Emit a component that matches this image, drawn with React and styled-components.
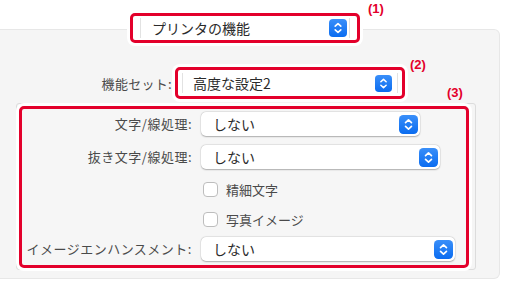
import React from "react";
import styled, { createGlobalStyle } from "styled-components";

const GlobalStyle = createGlobalStyle`
  body {
    margin: 0;
    background: #ffffff;
    font-family: "Noto Sans CJK JP", "Noto Sans", sans-serif;
  }
`;

const Page = styled.div`
  position: relative;
  width: 526px;
  height: 283px;
  padding-top: 13px;
  box-sizing: border-box;
  overflow: hidden;
`;

const Note = styled.span`
  position: absolute;
  left: ${(props) => props.$x}px;
  top: ${(props) => props.$y}px;
  font-family: "Liberation Sans", Arial, sans-serif;
  font-weight: 700;
  font-size: 13px;
  line-height: 14px;
  color: #e3002b;
`;

const Highlight = styled.div`
  position: relative;
  z-index: 1;
  box-sizing: border-box;
  width: ${(props) => props.$w}px;
  height: ${(props) => (props.$h ? `${props.$h}px` : "auto")};
  border: 3px solid #e3002b;
  border-radius: 5px;
  box-shadow: 0 0 0 3px #ffffff;
  background: ${(props) => props.$bg || "#ffffff"};
`;

const TabRow = styled.div`
  position: relative;
  z-index: 1;
  margin-left: 130px;
`;

const Panel = styled.div`
  margin-top: -14px;
  width: 500px;
  height: 250px;
  box-sizing: border-box;
  padding: 38px 0 0 16px;
  background: #f5f5f5;
  border: 1px solid #e7e7e7;
  border-left: none;
  border-radius: 0 6px 6px 0;
`;

const SetRow = styled.div`
  display: flex;
  align-items: center;
  margin-left: -16px;
  margin-top: -1px;
`;

const SetLabel = styled.span`
  width: 172px;
  text-align: right;
  font-size: 13px;
  letter-spacing: 0.3px;
  color: #4a4a4a;
  margin-right: 3px;
`;

const FlatPopup = styled.div`
  display: flex;
  align-items: center;
  height: 100%;
  padding: 0 ${(props) => props.$inset}px;
`;

const FlatField = styled.div`
  flex: 1;
  display: flex;
  align-items: center;
  height: 20px;
  border-left: 1px solid #e2e2e2;
  border-right: 1px solid #e2e2e2;
  padding: 0 ${(props) => props.$right}px 0 ${(props) => props.$left}px;
  font-size: 14px;
  color: #2a2a2a;
`;

const Value = styled.span`
  flex: 1;
`;

const GroupBox = styled.div`
  margin-top: 4px;
  width: 460px;
  height: 167px;
  box-sizing: border-box;
  border: 1px solid #dcdcdc;
  border-radius: 3px;
  padding: 2px 0 0 2px;
`;

const Rows = styled.div`
  display: grid;
  grid-template-columns: 170px 1fr;
  column-gap: 9px;
  align-items: center;
  padding: 3px 0 4px;
`;

const Label = styled.span`
  text-align: right;
  font-size: 13px;
  letter-spacing: 0.5px;
  color: #4a4a4a;
  margin-top: ${(props) => props.$top || 0}px;
  line-height: 24px;
`;

const Popup = styled.div`
  display: flex;
  align-items: center;
  box-sizing: border-box;
  width: ${(props) => props.$w}px;
  height: 24px;
  margin-top: ${(props) => props.$top || 0}px;
  padding: 0 2px 0 12px;
  background: #ffffff;
  border-radius: 5px;
  box-shadow: 0 0.5px 1.5px rgba(0, 0, 0, 0.28), 0 0 0 0.5px rgba(0, 0, 0, 0.06);
  font-size: 14px;
  color: #2a2a2a;
`;

const CheckRow = styled.label`
  grid-column: 2;
  display: flex;
  align-items: center;
  gap: 8px;
  height: 24px;
  margin-top: ${(props) => props.$top || 0}px;
  padding-left: 2px;
  font-size: 13px;
  color: #4a4a4a;
`;

const Box = styled.span`
  width: 15px;
  height: 15px;
  box-sizing: border-box;
  border: 1px solid #bdbdbd;
  border-radius: 4px;
  background: #ffffff;
`;

const Stepper = ({ size = 18 }) => (
  <svg width={size} height={size} viewBox="0 0 18 18">
    <defs>
      <linearGradient id="stepperBlue" x1="0" y1="0" x2="0" y2="1">
        <stop offset="0" stopColor="#3a8ff9" />
        <stop offset="1" stopColor="#0a6cf0" />
      </linearGradient>
    </defs>
    <rect x="0" y="0" width="18" height="18" rx="4" fill="url(#stepperBlue)" />
    <path
      d="M6.2 7.2 L9 4.6 L11.8 7.2 M6.2 10.8 L9 13.4 L11.8 10.8"
      fill="none"
      stroke="#ffffff"
      strokeWidth="1.6"
      strokeLinecap="round"
      strokeLinejoin="round"
    />
  </svg>
);

const App = () => {
  return (
    <Page>
      <GlobalStyle />
      <Note $x={368} $y={2}>(1)</Note>
      <Note $x={410} $y={58}>(2)</Note>
      <Note $x={447} $y={86}>(3)</Note>

      <TabRow>
        <Highlight $w={230} $h={30}>
          <FlatPopup $inset={7}>
            <FlatField $left={11} $right={2}>
              <Value>プリンタの機能</Value>
              <Stepper size={18} />
            </FlatField>
          </FlatPopup>
        </Highlight>
      </TabRow>

      <Panel>
        <SetRow>
          <SetLabel>機能セット:</SetLabel>
          <Highlight $w={230} $h={32}>
            <FlatPopup $inset={4}>
              <FlatField $left={10} $right={5}>
                <Value>高度な設定2</Value>
                <Stepper size={17} />
              </FlatField>
            </FlatPopup>
          </Highlight>
        </SetRow>

        <GroupBox>
          <Highlight $w={450} $bg="#f6f6f6">
            <Rows>
              <Label>文字/線処理:</Label>
              <Popup $w={219}>
                <Value>しない</Value>
                <Stepper size={19} />
              </Popup>

              <Label $top={9}>抜き文字/線処理:</Label>
              <Popup $w={239} $top={9}>
                <Value>しない</Value>
                <Stepper size={19} />
              </Popup>

              <CheckRow $top={8}>
                <Box />
                精細文字
              </CheckRow>

              <CheckRow $top={6}>
                <Box />
                写真イメージ
              </CheckRow>

              <Label $top={6}>イメージエンハンスメント:</Label>
              <Popup $w={254} $top={6}>
                <Value>しない</Value>
                <Stepper size={19} />
              </Popup>
            </Rows>
          </Highlight>
        </GroupBox>
      </Panel>
    </Page>
  );
};

export default App;
